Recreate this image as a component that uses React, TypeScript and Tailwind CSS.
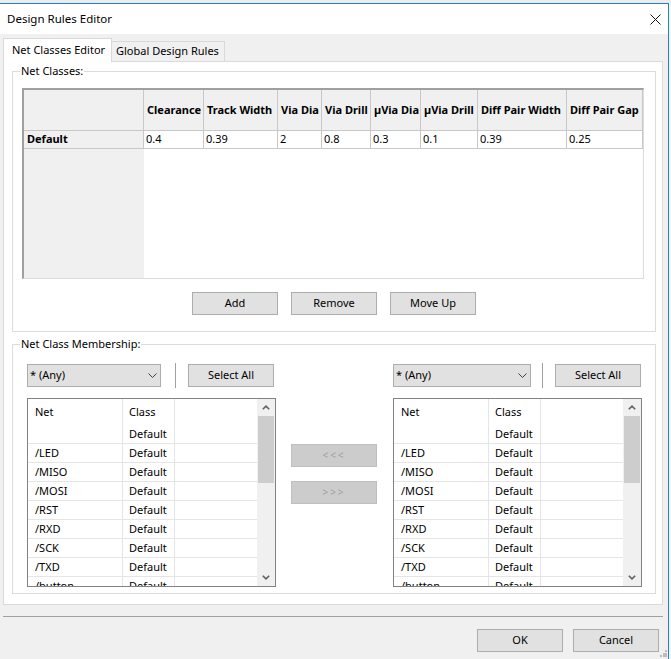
import React from "react";

const columns = [
  { name: "Clearance", value: "0.4" },
  { name: "Track Width", value: "0.39" },
  { name: "Via Dia", value: "2" },
  { name: "Via Drill", value: "0.8" },
  { name: "µVia Dia", value: "0.3" },
  { name: "µVia Drill", value: "0.1" },
  { name: "Diff Pair Width", value: "0.39" },
  { name: "Diff Pair Gap", value: "0.25" },
];

const nets = ["/LED", "/MISO", "/MOSI", "/RST", "/RXD", "/SCK", "/TXD", "/button"];

function Btn({ children, className = "" }: { children: React.ReactNode; className?: string }) {
  return (
    <div
      className={`h-[23px] w-[86px] shrink-0 border border-[#adadad] bg-[#e1e1e1] flex items-center justify-center ${className}`}
    >
      {children}
    </div>
  );
}

function Combo({ width }: { width: string }) {
  return (
    <div className={`${width} h-[23px] shrink-0 border border-[#adadad] bg-[#e1e1e1] flex items-center justify-between pl-[2px] pr-[3px]`}>
      <span>* (Any)</span>
      <svg width="9" height="5" viewBox="0 0 9 5">
        <polyline points="0.5,0.5 4.5,4.5 8.5,0.5" fill="none" stroke="#404040" strokeWidth="1" />
      </svg>
    </div>
  );
}

function Arrow({ up }: { up?: boolean }) {
  return (
    <svg width="8" height="5" viewBox="0 0 8 5">
      <polyline
        points={up ? "0.8,4.3 4,1.2 7.2,4.3" : "0.8,0.7 4,3.8 7.2,0.7"}
        fill="none"
        stroke="#606060"
        strokeWidth="1.6"
      />
    </svg>
  );
}

function ListRow({ net, cls, header }: { net: string; cls: string; header?: boolean }) {
  return (
    <div className={`flex shrink-0 ${header ? "h-[26px]" : "h-[19px] border-b border-[#e5e5e5]"}`}>
      <div className="w-[95px] border-r border-[#e5e5e5] pl-[7px] flex items-center">{net}</div>
      <div className="w-[52px] border-r border-[#e5e5e5] pl-[6px] flex items-center">{cls}</div>
      <div className="flex-1" />
    </div>
  );
}

// the last row is cut by the list's bottom edge, as in the dialog
function NetList() {
  return (
    <div className="mt-[11px] w-[249px] h-[189px] border border-[#828282] bg-white flex overflow-hidden">
      <div className="w-[229px] flex flex-col overflow-hidden">
        <ListRow net="Net" cls="Class" header />
        <ListRow net="" cls="Default" />
        {nets.map((n) => (
          <ListRow key={n} net={n} cls="Default" />
        ))}
      </div>
      <div className="w-[18px] bg-[#f0f0f0] flex flex-col">
        <div className="h-[17px] flex items-center justify-center">
          <Arrow up />
        </div>
        <div className="ml-[1px] w-[16px] h-[67px] bg-[#cdcdcd]" />
        <div className="flex-1" />
        <div className="h-[17px] flex items-center justify-center">
          <Arrow />
        </div>
      </div>
    </div>
  );
}

function GroupLabel({ children }: { children: React.ReactNode }) {
  return <div className="-mt-[9px] ml-[7px] w-fit bg-white px-[1px] h-[16px] leading-[16px]">{children}</div>;
}

export default function App() {
  return (
    <div className="w-[671px] h-[659px] overflow-hidden bg-[#f4f4f4] text-[11px] text-black font-['Noto_Sans','DejaVu_Sans',sans-serif]">
      <div className="h-[3px] bg-[#ececec]" />
      <div className="w-[669px] h-[656px] border-t border-r border-[#2a7bd0] flex flex-col">
        {/* title bar */}
        <div className="h-[30px] shrink-0 bg-white flex items-center justify-between pl-[7px] pr-[7px]">
          <span className="text-[11.5px]">Design Rules Editor</span>
          <svg width="11" height="11" viewBox="0 0 11 11">
            <line x1="0.5" y1="0.5" x2="10.5" y2="10.5" stroke="#111" strokeWidth="1" />
            <line x1="10.5" y1="0.5" x2="0.5" y2="10.5" stroke="#111" strokeWidth="1" />
          </svg>
        </div>

        <div className="flex-1 bg-[#f0f0f0] pt-[4px] pl-[3px] flex flex-col">
          {/* tabs */}
          <div className="flex items-end h-[23px] shrink-0">
            <div className="relative z-10 -mb-px w-[109px] h-[24px] bg-white border border-b-0 border-[#d9d9d9] pl-[8px] flex items-center">
              Net Classes Editor
            </div>
            <div className="w-[113px] h-[20px] bg-[#f0f0f0] border-t border-r border-[#d9d9d9] pl-[4px] flex items-center">
              Global Design Rules
            </div>
          </div>

          {/* tab panel */}
          <div className="w-[660px] h-[544px] shrink-0 border border-[#d9d9d9] bg-white pl-[8px] pt-[9px] flex flex-col">
            {/* Net Classes group */}
            <div className="w-[644px] h-[261px] shrink-0 border border-[#dcdcdc] flex flex-col">
              <GroupLabel>Net Classes:</GroupLabel>
              <div className="ml-[9px] mt-[9px] w-[622px] h-[191px] flex flex-col border-t-2 border-l-2 border-t-[#a0a0a0] border-l-[#a0a0a0] border-r border-b border-r-[#dcdcdc] border-b-[#dcdcdc]">
                <div className="grid grid-cols-[120px_60px_74px_44px_49px_50px_57px_89px_76px]">
                  <div className="h-[41px] bg-[#f0f0f0] border-r border-b border-[#c8c8c8]" />
                  {columns.map((c) => (
                    <div
                      key={c.name}
                      className="h-[41px] bg-[#f0f0f0] border-r border-b border-[#c8c8c8] flex items-center pl-[3px] font-bold whitespace-nowrap overflow-hidden"
                    >
                      {c.name}
                    </div>
                  ))}
                  <div className="h-[18px] bg-[#f0f0f0] border-r border-b border-[#c8c8c8] flex items-center pl-[3px] font-bold">
                    Default
                  </div>
                  {columns.map((c) => (
                    <div key={c.name} className="h-[18px] border-r border-b border-[#c8c8c8] flex items-center pl-[2px]">
                      {c.value}
                    </div>
                  ))}
                </div>
                <div className="flex-1 flex">
                  <div className="w-[120px] bg-[#f0f0f0]" />
                </div>
              </div>
              <div className="mt-[13px] flex justify-center gap-[13px]">
                <Btn>Add</Btn>
                <Btn>Remove</Btn>
                <Btn>Move Up</Btn>
              </div>
            </div>

            {/* Net Class Membership group */}
            <div className="mt-[12px] w-[644px] h-[250px] shrink-0 border border-[#dcdcdc] flex flex-col">
              <GroupLabel>Net Class Membership:</GroupLabel>
              <div className="mt-[11px] ml-[14px] flex">
                <div className="w-[249px] flex flex-col">
                  <div className="h-[24px] flex items-center">
                    <Combo width="w-[134px]" />
                    <div className="ml-[14px] w-px h-[25px] bg-[#a0a0a0]" />
                    <Btn className="ml-[12px]">Select All</Btn>
                  </div>
                  <NetList />
                </div>

                <div className="ml-[15px] flex flex-col">
                  <div className="mt-[81px] h-[23px] w-[86px] border border-[#bfbfbf] bg-[#cccccc] text-[#a0a0a0] flex items-center justify-center tracking-[2px] text-[10px]">
                    {"<<<"}
                  </div>
                  <div className="mt-[14px] h-[23px] w-[86px] border border-[#bfbfbf] bg-[#cccccc] text-[#a0a0a0] flex items-center justify-center tracking-[2px] text-[10px]">
                    {">>>"}
                  </div>
                </div>

                <div className="ml-[16px] w-[249px] flex flex-col">
                  <div className="h-[24px] flex items-center">
                    <Combo width="w-[138px]" />
                    <div className="ml-[11px] w-px h-[25px] bg-[#a0a0a0]" />
                    <Btn className="ml-[12px]">Select All</Btn>
                  </div>
                  <NetList />
                </div>
              </div>
            </div>
          </div>

          {/* separator + dialog buttons */}
          <div className="mt-[11px] w-[660px] h-px shrink-0 bg-[#a0a0a0]" />
          <div className="mt-[12px] w-[664px] flex items-start">
            <Btn className="ml-auto">OK</Btn>
            <Btn className="ml-[10px]">Cancel</Btn>
            <svg className="mt-[21px] ml-[1px]" width="7" height="7" viewBox="0 0 7 7">
              <rect x="5" y="0" width="2" height="2" fill="#bcbcbc" />
              <rect x="3" y="3" width="2" height="2" fill="#bcbcbc" />
              <rect x="5" y="3" width="2" height="2" fill="#bcbcbc" />
              <rect x="0" y="5" width="2" height="2" fill="#bcbcbc" />
              <rect x="3" y="5" width="2" height="2" fill="#bcbcbc" />
              <rect x="5" y="5" width="2" height="2" fill="#bcbcbc" />
            </svg>
          </div>
        </div>
      </div>
    </div>
  );
}
